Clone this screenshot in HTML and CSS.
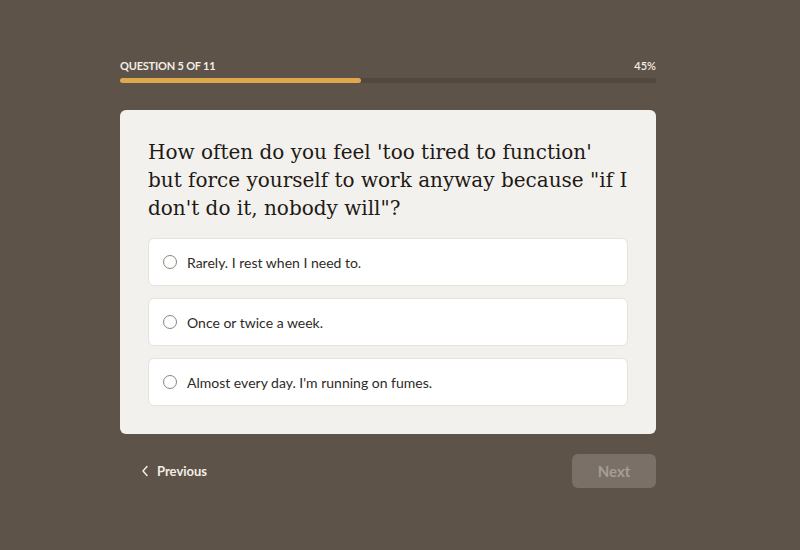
FILE: index.html
```html
<!DOCTYPE html>
<html lang="en">
<head>
<meta charset="utf-8">
<title>Quiz</title>
<link rel="stylesheet" href="styles.css">
</head>
<body>
<main class="quiz">
  <header class="progress">
    <div class="progress-labels">
      <span class="progress-step">Question 5 of 11</span>
      <span class="progress-pct">45%</span>
    </div>
    <div class="progress-track"><div class="progress-fill" style="width:45%"></div></div>
  </header>

  <section class="card">
    <h1 class="question">How often do you feel 'too tired to function' but force yourself to work anyway because "if I don't do it, nobody will"?</h1>
    <div class="options">
      <label class="option"><span class="radio"></span><span class="option-text">Rarely. I rest when I need to.</span></label>
      <label class="option"><span class="radio"></span><span class="option-text">Once or twice a week.</span></label>
      <label class="option"><span class="radio"></span><span class="option-text">Almost every day. I'm running on fumes.</span></label>
    </div>
  </section>

  <footer class="nav">
    <button class="btn-prev" type="button">
      <svg width="8" height="12" viewBox="0 0 8 12" aria-hidden="true"><path d="M6 1.5 L2 6 L6 10.5" fill="none" stroke="currentColor" stroke-width="1.5" stroke-linecap="round" stroke-linejoin="round"/></svg>
      <span>Previous</span>
    </button>
    <button class="btn-next" type="button" disabled>Next</button>
  </footer>
</main>
</body>
</html>
```

FILE: styles.css
```css
* { box-sizing: border-box; }
html, body { margin: 0; padding: 0; }
body {
  background: #5d5349;
  font-family: "Lato", "Open Sans", sans-serif;
  color: #2a2520;
  width: 800px;
  height: 550px;
  overflow: hidden;
}
.quiz {
  width: 536px;
  margin-left: 120px;
  padding-top: 59px;
  display: flex;
  flex-direction: column;
}
.progress-labels {
  display: flex;
  justify-content: space-between;
  align-items: center;
  color: #f2ede6;
  font-size: 11px;
  font-weight: 700;
  line-height: 13px;
}
.progress-step {
  text-transform: uppercase;
  letter-spacing: -0.2px;
}
.progress-pct { font-weight: 600; }
.progress-track {
  margin-top: 6px;
  height: 5px;
  border-radius: 3px;
  background: #52483f;
}
.progress-fill {
  height: 100%;
  border-radius: 3px;
  background: #e0a84d;
}
.card {
  margin-top: 27px;
  background: #f3f1ed;
  border-radius: 6px;
  padding: 28px 28px 28px;
}
.question {
  margin: 0 0 16px;
  font-family: "DejaVu Serif", "Liberation Serif", serif;
  font-weight: 400;
  font-size: 20px;
  line-height: 28px;
  color: #1e1a16;
}
.options {
  display: flex;
  flex-direction: column;
  gap: 12px;
}
.option {
  display: flex;
  align-items: center;
  gap: 10px;
  height: 48px;
  padding: 0 14px;
  background: #ffffff;
  border: 1px solid #e7e3dc;
  border-radius: 6px;
}
.radio {
  width: 14px;
  height: 14px;
  border: 1.2px solid #8a847d;
  border-radius: 50%;
  flex: none;
}
.option-text {
  font-size: 14px;
  color: #2e2a26;
}
.nav {
  margin-top: 20px;
  display: flex;
  justify-content: space-between;
  align-items: center;
}
.btn-prev {
  display: flex;
  align-items: center;
  gap: 8px;
  background: none;
  border: none;
  padding: 0 0 0 21px;
  color: #f2ede6;
  font-family: inherit;
  font-size: 13px;
  font-weight: 700;
}
.btn-next {
  width: 84px;
  height: 34px;
  border: none;
  border-radius: 6px;
  background: #7a7068;
  color: #a69d94;
  font-family: inherit;
  font-size: 15px;
  font-weight: 700;
}
```
